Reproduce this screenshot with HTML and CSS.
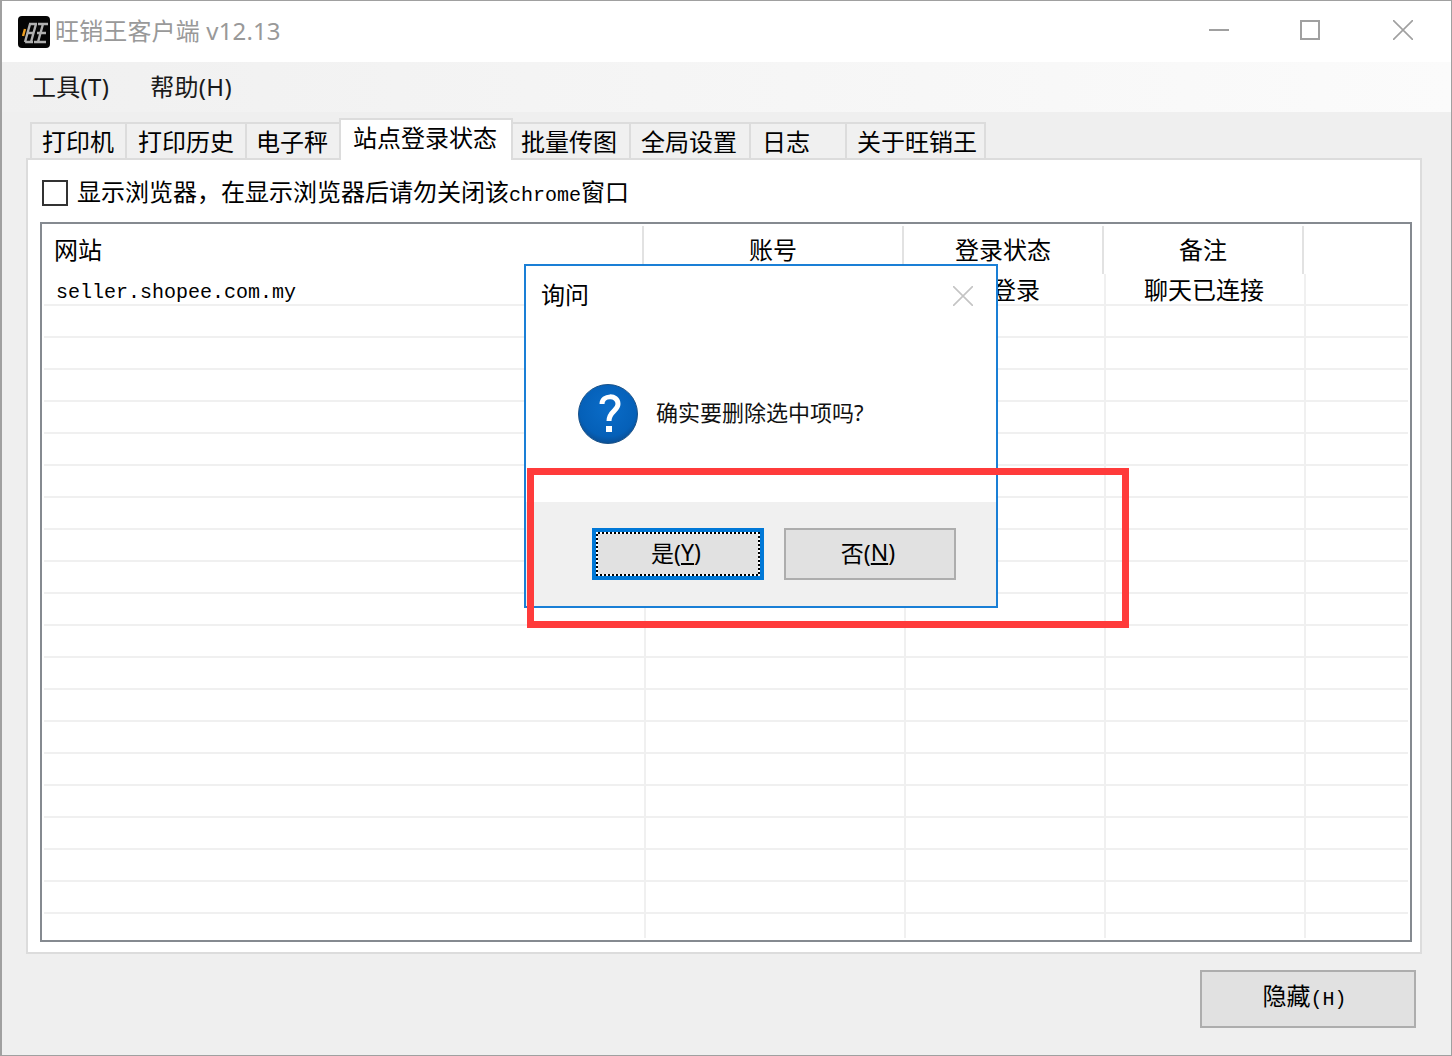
FILE: index.html
```html
<!DOCTYPE html>
<html lang="zh-CN">
<head>
<meta charset="utf-8">
<title>旺销王客户端 v12.13</title>
<link rel="stylesheet" href="styles.css">
</head>
<body>
<div class="window">
  <header class="titlebar">
    <svg class="logo" viewBox="0 0 32 32" width="32" height="32">
      <rect width="32" height="32" rx="4" fill="#050505"/>
      <path d="M12 8 L7 26 M18 8 L13 26 M11 8 H19 M9.500 17 H16 M7 26 H15 M25 8 L20 26 M20 8 H30 M19 17 H28 M16 26 H28" stroke="#b0b0b0" stroke-width="2.4" fill="none"/>
      <path d="M7 13 L5 20" stroke="#f0a020" stroke-width="2.4" fill="none"/>
    </svg>
    <span class="apptitle">旺销王客户端 v12.13</span>
    <div class="winctrls">
      <svg class="winicon" viewBox="0 0 20 20" width="20" height="20"><path d="M0 10 H20" stroke="#a0a0a0" stroke-width="2"/></svg>
      <svg class="winicon" viewBox="0 0 20 20" width="20" height="20"><rect x="1" y="1" width="18" height="18" fill="none" stroke="#a0a0a0" stroke-width="2"/></svg>
      <svg class="winicon winicon-close" viewBox="0 0 20 20" width="20" height="20"><path d="M0 0 L20 20 M20 0 L0 20" stroke="#a0a0a0" stroke-width="1.6"/></svg>
    </div>
  </header>
  <nav class="menubar">
    <span class="menuitem">工具(T)</span>
    <span class="menuitem">帮助(H)</span>
  </nav>
  <div class="tabs">
    <div class="tab pad-10">打印机</div>
    <div class="tab pad-11">打印历史</div>
    <div class="tab pad-9">电子秤</div>
    <div class="tab tab-active pad-12">站点登录状态</div>
    <div class="tab pad-6">批量传图</div>
    <div class="tab pad-10">全局设置</div>
    <div class="tab pad-11">日志</div>
    <div class="tab tab-last pad-10">关于旺销王</div>
  </div>
  <section class="panel">
    <label class="checkrow">
      <span class="checkbox"></span>
      <span class="checklabel">显示浏览器&#xFF0C;在显示浏览器后请勿关闭该<span class="mono">chrome</span>窗口</span>
    </label>
    <div class="table">
      <div class="thead">
        <div class="th th-left">网站</div>
        <div class="th">账号</div>
        <div class="th">登录状态</div>
        <div class="th">备注</div>
        <div class="th th-end"></div>
      </div>
      <div class="tbody">
        <div class="row">
          <div class="cell cell-site">seller.shopee.com.my</div>
          <div class="cell"></div>
          <div class="cell">未登录</div>
          <div class="cell">聊天已连接</div>
          <div class="cell cell-end"></div>
        </div>
        <div class="row"><div class="cell"></div><div class="cell"></div><div class="cell"></div><div class="cell"></div><div class="cell cell-end"></div></div>
        <div class="row"><div class="cell"></div><div class="cell"></div><div class="cell"></div><div class="cell"></div><div class="cell cell-end"></div></div>
        <div class="row"><div class="cell"></div><div class="cell"></div><div class="cell"></div><div class="cell"></div><div class="cell cell-end"></div></div>
        <div class="row"><div class="cell"></div><div class="cell"></div><div class="cell"></div><div class="cell"></div><div class="cell cell-end"></div></div>
        <div class="row"><div class="cell"></div><div class="cell"></div><div class="cell"></div><div class="cell"></div><div class="cell cell-end"></div></div>
        <div class="row"><div class="cell"></div><div class="cell"></div><div class="cell"></div><div class="cell"></div><div class="cell cell-end"></div></div>
        <div class="row"><div class="cell"></div><div class="cell"></div><div class="cell"></div><div class="cell"></div><div class="cell cell-end"></div></div>
        <div class="row"><div class="cell"></div><div class="cell"></div><div class="cell"></div><div class="cell"></div><div class="cell cell-end"></div></div>
        <div class="row"><div class="cell"></div><div class="cell"></div><div class="cell"></div><div class="cell"></div><div class="cell cell-end"></div></div>
        <div class="row"><div class="cell"></div><div class="cell"></div><div class="cell"></div><div class="cell"></div><div class="cell cell-end"></div></div>
        <div class="row"><div class="cell"></div><div class="cell"></div><div class="cell"></div><div class="cell"></div><div class="cell cell-end"></div></div>
        <div class="row"><div class="cell"></div><div class="cell"></div><div class="cell"></div><div class="cell"></div><div class="cell cell-end"></div></div>
        <div class="row"><div class="cell"></div><div class="cell"></div><div class="cell"></div><div class="cell"></div><div class="cell cell-end"></div></div>
        <div class="row"><div class="cell"></div><div class="cell"></div><div class="cell"></div><div class="cell"></div><div class="cell cell-end"></div></div>
        <div class="row"><div class="cell"></div><div class="cell"></div><div class="cell"></div><div class="cell"></div><div class="cell cell-end"></div></div>
        <div class="row"><div class="cell"></div><div class="cell"></div><div class="cell"></div><div class="cell"></div><div class="cell cell-end"></div></div>
        <div class="row"><div class="cell"></div><div class="cell"></div><div class="cell"></div><div class="cell"></div><div class="cell cell-end"></div></div>
        <div class="row"><div class="cell"></div><div class="cell"></div><div class="cell"></div><div class="cell"></div><div class="cell cell-end"></div></div>
        <div class="row"><div class="cell"></div><div class="cell"></div><div class="cell"></div><div class="cell"></div><div class="cell cell-end"></div></div>
        <div class="row row-tail"><div class="cell"></div><div class="cell"></div><div class="cell"></div><div class="cell"></div><div class="cell cell-end"></div></div>
      </div>
    </div>
  </section>
  <div class="actions">
    <button class="hidebtn" type="button">隐藏<span class="mono">(H)</span></button>
  </div>

  <div class="dialog">
    <div class="dlg-title">
      <span class="dlg-caption">询问</span>
      <svg viewBox="0 0 20 20" width="20" height="20"><path d="M0 0 L20 20 M20 0 L0 20" stroke="#c4c4c4" stroke-width="1.6"/></svg>
    </div>
    <div class="dlg-body">
      <svg class="dlg-icon" viewBox="0 0 60 60" width="60" height="60">
        <defs>
          <radialGradient id="qfill" cx="50%" cy="40%" r="60%">
            <stop offset="0" stop-color="#0a6cc8"/>
            <stop offset="0.8" stop-color="#0560b8"/>
            <stop offset="1" stop-color="#0a4f96"/>
          </radialGradient>
        </defs>
        <circle cx="30" cy="30" r="29.5" fill="url(#qfill)" stroke="#1b5288" stroke-width="1"/>
        <path d="M24 20 C24 11 40 10 40 20 C40 27 31 27 31 37" fill="none" stroke="#fff" stroke-width="5"/>
        <rect x="28" y="42" width="6" height="6" fill="#fff"/>
      </svg>
      <span class="dlg-text">确实要删除选中项吗?</span>
    </div>
    <div class="dlg-footer">
      <button class="dlgbtn dlgbtn-default" type="button"><span class="focusring">是(<u>Y</u>)</span></button>
      <button class="dlgbtn" type="button"><span class="focusring focusring-off">否(<u>N</u>)</span></button>
    </div>
  </div>
  <div class="redmark"></div>
</div>
</body>
</html>
```

FILE: styles.css
```css
* { box-sizing: border-box; }
html, body { margin: 0; padding: 0; }
body {
  width: 1452px;
  height: 1056px;
  overflow: hidden;
  background: #fff;
  font-family: "Noto Sans", "Noto Sans CJK SC", sans-serif;
  font-size: 24px;
  color: #000;
}
.mono {
  font-family: "Liberation Mono", monospace;
  font-size: 20px;
}
.window {
  position: relative;
  width: 1452px;
  height: 1056px;
  border: 1px solid #a0a0a0;
  border-left-width: 2px;
  background: #efefef;
  display: flex;
  flex-direction: column;
}
.titlebar {
  height: 61px;
  flex: none;
  background: #fff;
  display: flex;
  align-items: center;
  padding-left: 16px;
}
.logo { flex: none; }
.apptitle {
  margin-left: 5px;
  padding-bottom: 2px;
  color: #999;
  font-size: 24px;
  letter-spacing: 0.15px;
  line-height: 60px;
  white-space: nowrap;
}
.winctrls {
  margin-left: auto;
  margin-right: 38px;
  padding-bottom: 3px;
  display: flex;
  gap: 71px;
  align-items: center;
}
.winicon { flex: none; }
.winicon-close { margin-left: 2px; }
.menubar {
  height: 50px;
  flex: none;
  background: linear-gradient(90deg, #f0f0f0, #fbfbfb);
  display: flex;
  align-items: center;
  padding-left: 30px;
  gap: 41px;
}
.menuitem { font-size: 24px; letter-spacing: 0.3px; color: #1a1a1a; line-height: 50px; }
.tabs {
  position: relative;
  z-index: 1;
  flex: none;
  margin: 6px 0 -2px 28px;
  height: 42px;
  display: grid;
  grid-template-columns: 95px 120px 94px 174px 116px 120px 96px 141px;
  justify-content: start;
  align-items: end;
}
.tab {
  height: 38px;
  background: #f0f0f0;
  border: 2px solid #dcdcdc;
  border-right: 0;
  line-height: 36px;
  font-size: 24px;
  white-space: nowrap;
}
.tab-active {
  height: 42px;
  background: #fff;
  border-right: 2px solid #dcdcdc;
  border-bottom: 0;
  line-height: 36px;
}
.tab-last { border-right: 2px solid #dcdcdc; }
.tab-active + .tab { border-left: 0; }
.pad-6 { padding-left: 8px; }
.pad-9 { padding-left: 9px; }
.pad-10 { padding-left: 10px; }
.pad-11 { padding-left: 11px; }
.pad-12 { padding-left: 12px; }
.panel {
  flex: none;
  height: 796px;
  margin: 0 29px 0 24px;
  background: #fff;
  border: 2px solid #dcdcdc;
  padding: 20px 8px 10px 12px;
}
.checkrow {
  display: flex;
  align-items: center;
  height: 26px;
  margin-bottom: 16px;
}
.checkbox {
  flex: none;
  width: 26px;
  height: 26px;
  margin-left: 2px;
  border: 2px solid #333;
  background: #fff;
}
.checklabel {
  margin-left: 9px;
  padding-top: 1px;
  font-size: 24px;
  line-height: 26px;
  white-space: nowrap;
}
.table {
  height: 720px;
  border: 2px solid #858a90;
  background: #fff;
  overflow: hidden;
}
.thead {
  height: 50px;
  padding-top: 2px;
  display: grid;
  grid-template-columns: 602px 260px 200px 200px 1fr;
}
.th {
  height: 48px;
  line-height: 48px;
  text-align: center;
  border-right: 2px solid #e2e2e2;
  font-size: 24px;
}
.th-left { text-align: left; padding-left: 12px; }
.th-end { border-right: 0; }
.tbody { padding: 0 2px; }
.row {
  height: 32px;
  border-bottom: 2px solid #f0f0f0;
  display: grid;
  grid-template-columns: 602px 260px 200px 200px 102px;
}
.row-tail { height: 24px; border-bottom: 0; }
.cell {
  height: 32px;
  margin-bottom: -2px;
  padding-right: 2px;
  border-right: 2px solid #f0f0f0;
  text-align: center;
  line-height: 32px;
  font-size: 24px;
  white-space: nowrap;
}
.row-tail .cell { height: 24px; margin-bottom: 0; }
.cell-end { border-right: 0; }
.cell-site {
  text-align: left;
  padding-left: 12px;
  font-family: "Liberation Mono", monospace;
  font-size: 20px;
  line-height: 37px;
}
.actions {
  flex: none;
  display: flex;
  justify-content: flex-end;
  margin-top: 16px;
  padding-right: 35px;
}
.hidebtn {
  width: 216px;
  height: 58px;
  background: #e1e1e1;
  border: 2px solid #adadad;
  font-family: "Noto Sans", "Noto Sans CJK SC", sans-serif;
  font-size: 24px;
  color: #000;
  padding: 0 7px 9px 0;
}
.dialog {
  position: absolute;
  left: 522px;
  top: 263px;
  width: 474px;
  height: 344px;
  z-index: 2;
  background: #fff;
  border: 2px solid #1a7fd6;
  display: flex;
  flex-direction: column;
}
.dlg-title {
  flex: none;
  height: 60px;
  padding: 0 23px 0 15px;
  display: flex;
  align-items: center;
  justify-content: space-between;
  font-size: 24px;
}
.dlg-caption { padding-bottom: 5px; }
.dlg-body {
  flex: none;
  height: 176px;
  padding: 58px 0 0 52px;
  display: flex;
  align-items: flex-start;
  gap: 18px;
}
.dlg-icon { flex: none; }
.dlg-text {
  font-size: 22px;
  line-height: 57px;
  white-space: nowrap;
  color: #111;
}
.dlg-footer {
  flex: 1;
  background: #f0f0f0;
  padding: 26px 0 0 66px;
  display: flex;
  align-items: flex-start;
  gap: 20px;
}
.dlgbtn {
  width: 172px;
  height: 52px;
  background: #e1e1e1;
  border: 2px solid #adadad;
  padding: 0;
  font-family: "Noto Sans", "Noto Sans CJK SC", sans-serif;
  font-size: 23px;
  color: #000;
  display: flex;
}
.dlgbtn u { text-underline-offset: 2px; }
.dlgbtn-default {
  border: 4px solid #0078d7;
}
.focusring {
  flex: 1;
  display: flex;
  align-items: center;
  justify-content: center;
  padding: 0 4px 4px 0;
  border: 2px solid transparent;
  background:
    linear-gradient(#e1e1e1, #e1e1e1) padding-box,
    repeating-conic-gradient(#000 0 25%, #fff 0 50%) 0 0 / 4px 4px border-box;
}
.focusring-off { border: 0; background: none; }
.redmark {
  position: absolute;
  left: 525px;
  top: 467px;
  width: 602px;
  height: 160px;
  z-index: 3;
  border: 7px solid #ff3b3b;
}
```
